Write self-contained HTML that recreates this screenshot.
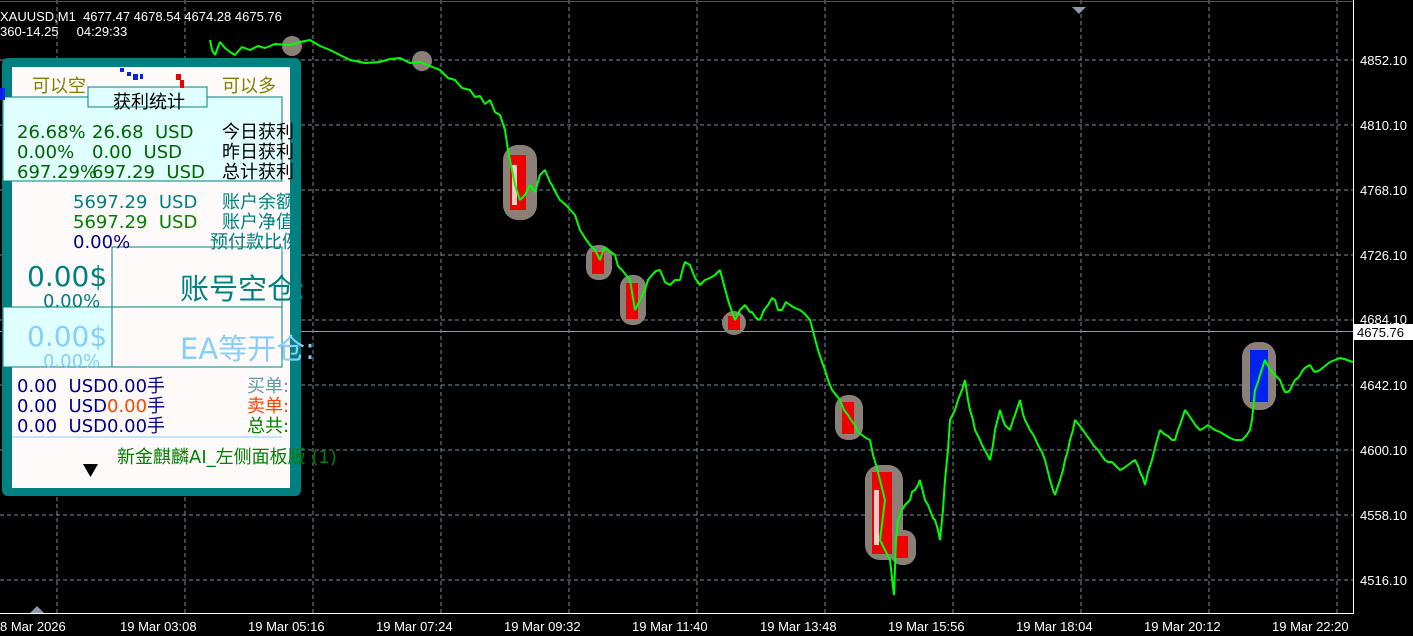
<!DOCTYPE html>
<html><head><meta charset="utf-8"><style>
html,body{margin:0;padding:0;background:#000;width:1413px;height:636px;overflow:hidden}
svg{display:block}
text{font-family:"Liberation Sans","Noto Sans CJK SC",sans-serif;white-space:pre}
.p text{font-family:"DejaVu Sans","Noto Sans CJK SC",sans-serif}
</style></head><body>
<svg width="1413" height="636" viewBox="0 0 1413 636" xmlns="http://www.w3.org/2000/svg" xml:space="preserve">
<rect width="1413" height="636" fill="#000"/>
<g stroke="#7a8a9a" stroke-width="1" stroke-dasharray="4,3">
<line x1="57" y1="0" x2="57" y2="613"/><line x1="185" y1="0" x2="185" y2="613"/><line x1="313" y1="0" x2="313" y2="613"/><line x1="441" y1="0" x2="441" y2="613"/><line x1="569" y1="0" x2="569" y2="613"/><line x1="697" y1="0" x2="697" y2="613"/><line x1="825" y1="0" x2="825" y2="613"/><line x1="953" y1="0" x2="953" y2="613"/><line x1="1081" y1="0" x2="1081" y2="613"/><line x1="1209" y1="0" x2="1209" y2="613"/><line x1="1337" y1="0" x2="1337" y2="613"/>
<line x1="0" y1="60" x2="1353" y2="60"/><line x1="0" y1="125" x2="1353" y2="125"/><line x1="0" y1="190" x2="1353" y2="190"/><line x1="0" y1="255" x2="1353" y2="255"/><line x1="0" y1="320" x2="1353" y2="320"/><line x1="0" y1="385" x2="1353" y2="385"/><line x1="0" y1="450" x2="1353" y2="450"/><line x1="0" y1="515" x2="1353" y2="515"/><line x1="0" y1="580" x2="1353" y2="580"/>
</g>
<line x1="0" y1="331.5" x2="1353" y2="331.5" stroke="#8a9aaa"/>
<line x1="0" y1="1.5" x2="1353" y2="1.5" stroke="#555"/>
<polygon points="1072,7 1086,7 1079,14" fill="#8a9aaa"/>
<polygon points="30,613 44,613 37,606" fill="#8a9aaa"/>
<g fill="#8a8078">
<circle cx="292" cy="46" r="10"/><circle cx="422" cy="61" r="10"/>
<rect x="503" y="145" width="34" height="75" rx="15"/>
<rect x="586" y="245" width="26" height="35" rx="12"/>
<rect x="620" y="275" width="26" height="50" rx="12"/>
<circle cx="734" cy="323" r="12"/>
<rect x="835" y="395" width="28" height="45" rx="13"/>
<rect x="865" y="465" width="38" height="95" rx="15"/>
<rect x="890" y="530" width="26" height="35" rx="12"/>
<rect x="1242" y="342" width="34" height="68" rx="15"/>
</g>
<g fill="#e00">
<rect x="510" y="155" width="16" height="55"/><rect x="592" y="252" width="12" height="22"/><rect x="626" y="283" width="12" height="36"/><rect x="728" y="316" width="12" height="14"/><rect x="842" y="402" width="12" height="32"/><rect x="872" y="472" width="20" height="82"/><rect x="896" y="536" width="12" height="22"/>
</g>
<g fill="#fff" opacity="0.8">
<rect x="512" y="165" width="5" height="40"/><rect x="874" y="490" width="5" height="55"/><rect x="1258" y="360" width="5" height="35"/>
</g>
<rect x="1250" y="350" width="18" height="52" fill="#0022ee"/>
<polyline fill="none" stroke="#00ff00" stroke-width="2" stroke-linejoin="bevel" points="210,40 212,50 215,55 220,42 225,48 230,52 235,55 242,47 250,50 258,46 265,48 275,44 290,45 300,42 310,40 320,46 330,50 340,55 350,60 365,63 380,62 390,59 400,58 410,63 420,62 430,66 440,70 448,78 455,80 462,88 470,90 475,97 480,96 485,104 490,100 495,112 500,115 505,130 508,150 510,160 515,185 520,200 525,195 530,185 535,192 540,175 545,170 550,182 552,185 557,195 560,200 566,205 575,215 580,230 585,238 590,245 595,250 600,260 604,248 608,250 615,255 618,266 622,270 626,275 630,280 635,310 640,300 645,290 648,280 652,275 656,271 660,270 665,282 670,285 675,280 680,280 683,268 685,262 690,265 695,278 700,285 705,280 710,278 715,275 720,270 724,285 728,300 732,312 735,320 740,310 745,305 750,312 752,312 756,318 760,320 764,310 768,305 772,298 775,300 778,310 782,310 786,302 790,305 795,308 800,310 805,314 810,320 814,335 818,350 822,362 825,370 828,380 832,390 836,395 840,400 844,410 848,415 851,420 855,425 858,432 862,435 866,438 870,440 873,455 876,465 880,480 885,500 880,540 885,550 890,560 894,595 896,540 898,520 902,510 905,505 910,500 912,492 915,490 918,485 920,480 923,492 925,500 928,505 930,510 933,518 935,520 938,530 940,540 943,510 945,480 948,450 950,420 955,410 958,400 962,390 965,380 968,400 970,410 973,420 975,430 980,440 982,445 986,452 990,460 993,445 995,430 998,418 1000,410 1003,420 1005,425 1008,428 1010,430 1013,420 1015,415 1018,406 1020,400 1023,414 1025,420 1028,426 1030,430 1034,436 1038,445 1042,452 1045,460 1048,472 1050,480 1053,490 1055,495 1058,486 1060,480 1063,470 1065,460 1068,450 1070,440 1073,430 1075,420 1080,426 1083,430 1087,436 1090,440 1094,446 1098,450 1102,456 1105,460 1108,462 1112,462 1116,466 1120,470 1124,468 1128,465 1132,462 1135,460 1138,466 1140,472 1143,478 1145,485 1148,472 1152,460 1156,444 1160,430 1164,434 1168,436 1172,440 1175,440 1178,430 1180,425 1183,416 1185,410 1188,414 1192,420 1196,426 1200,430 1204,428 1208,425 1212,428 1215,430 1220,432 1225,435 1230,438 1235,440 1238,440 1242,440 1246,436 1250,430 1252,420 1253,410 1255,390 1258,382 1260,375 1263,366 1265,360 1268,366 1272,372 1276,376 1280,380 1283,388 1285,392 1288,392 1290,390 1293,384 1295,380 1298,378 1300,375 1303,370 1305,368 1308,366 1310,365 1313,370 1315,372 1318,371 1320,370 1325,366 1330,362 1335,360 1340,358 1344,359 1347,360 1350,361 1353,362"/>
<line x1="1353.5" y1="0" x2="1353.5" y2="613.5" stroke="#fff"/>
<line x1="0" y1="613.5" x2="1354" y2="613.5" stroke="#fff"/>
<g fill="#fff" font-size="13">
<text x="1360" y="65">4852.10</text><text x="1360" y="130">4810.10</text><text x="1360" y="195">4768.10</text><text x="1360" y="260">4726.10</text><text x="1360" y="324">4684.10</text><text x="1360" y="390">4642.10</text><text x="1360" y="455">4600.10</text><text x="1360" y="520">4558.10</text><text x="1360" y="585">4516.10</text>
<text x="0" y="631">8 Mar 2026</text><text x="120" y="631">19 Mar 03:08</text><text x="248" y="631">19 Mar 05:16</text><text x="376" y="631">19 Mar 07:24</text><text x="504" y="631">19 Mar 09:32</text><text x="632" y="631">19 Mar 11:40</text><text x="760" y="631">19 Mar 13:48</text><text x="888" y="631">19 Mar 15:56</text><text x="1016" y="631">19 Mar 18:04</text><text x="1144" y="631">19 Mar 20:12</text><text x="1272" y="631">19 Mar 22:20</text>
<text x="0" y="21">XAUUSD,M1  4677.47 4678.54 4674.28 4675.76</text>
<text x="0" y="36">360-14.25     04:29:33</text>
</g>
<rect x="1354" y="324" width="59" height="16" fill="#fff"/>
<text x="1357" y="337" font-size="13" fill="#000">4675.76</text>
<rect x="2" y="58" width="299" height="438" rx="6" fill="#008080"/>
<rect x="12" y="67" width="278" height="421" fill="#fffafa"/>
<rect x="3" y="97" width="279" height="84" fill="#e0ffff" stroke="#008080"/>
<rect x="88" y="87" width="119" height="20" fill="#e0ffff" stroke="#008080"/>
<rect x="3" y="307" width="109" height="60" fill="#e0ffff" stroke="#008080"/>
<rect x="112" y="247" width="170" height="60" fill="#fffafa" stroke="#008080"/>
<rect x="112" y="307" width="170" height="60" fill="#fffafa" stroke="#008080"/>
<line x1="12" y1="437" x2="282" y2="437" stroke="#87cefa"/>
<g class="p" font-size="18">
<text x="32" y="92" fill="#808000">可以空</text><text x="222" y="92" fill="#808000">可以多</text>
<text x="113" y="108" fill="#000">获利统计</text>
<text x="17" y="138" fill="#006400">26.68%</text><text x="92" y="138" fill="#006400">26.68  USD</text><text x="222" y="138" fill="#000">今日获利</text>
<text x="17" y="158" fill="#006400">0.00%</text><text x="92" y="158" fill="#006400">0.00  USD</text><text x="222" y="158" fill="#000">昨日获利</text>
<text x="17" y="178" fill="#006400">697.29%</text><text x="92" y="178" fill="#006400">697.29  USD</text><text x="222" y="178" fill="#000">总计获利</text>
<text x="73" y="208" fill="#008080">5697.29  USD</text><text x="222" y="208" fill="#008080">账户余额</text>
<text x="73" y="228" fill="#008000">5697.29  USD</text><text x="222" y="228" fill="#008080">账户净值</text>
<text x="73" y="248" fill="#00008b">0.00%</text><text x="210" y="248" fill="#008080">预付款比例</text>
<text x="17" y="392" fill="#00008b">0.00  USD0.00手</text><text x="247" y="392" fill="#5f9ea0">买单:</text>
<text x="17" y="412" fill="#00008b">0.00  USD<tspan fill="#ff4500">0.00</tspan>手</text><text x="247" y="412" fill="#ff4500">卖单:</text>
<text x="17" y="432" fill="#00008b">0.00  USD0.00手</text><text x="247" y="432" fill="#008000">总共:</text>
<text x="117" y="463" fill="#008000">新金麒麟AI_左侧面板版 (1)</text>
<text x="27" y="286" font-size="28" fill="#008080">0.00$</text>
<text x="43" y="307" font-size="18" fill="#008080">0.00%</text>
<text x="180" y="299" font-size="29" fill="#008080">账号空仓:</text>
<text x="27" y="346" font-size="28" fill="#87cefa">0.00$</text>
<text x="43" y="367" font-size="18" fill="#87cefa">0.00%</text>
<text x="180" y="359" font-size="29" fill="#87cefa">EA等开仓:</text>
</g>
<polygon points="83,464 98,464 90.5,477" fill="#000"/>
<g fill="#0022ee"><rect x="120" y="68" width="4" height="4"/><rect x="127" y="72" width="4" height="4"/><rect x="133" y="74" width="5" height="6"/><rect x="140" y="74" width="3" height="5"/><rect x="0" y="88" width="5" height="12"/></g>
<g fill="#e00"><rect x="176" y="74" width="5" height="6"/><rect x="180" y="80" width="4" height="8"/></g>
</svg>
</body></html>
